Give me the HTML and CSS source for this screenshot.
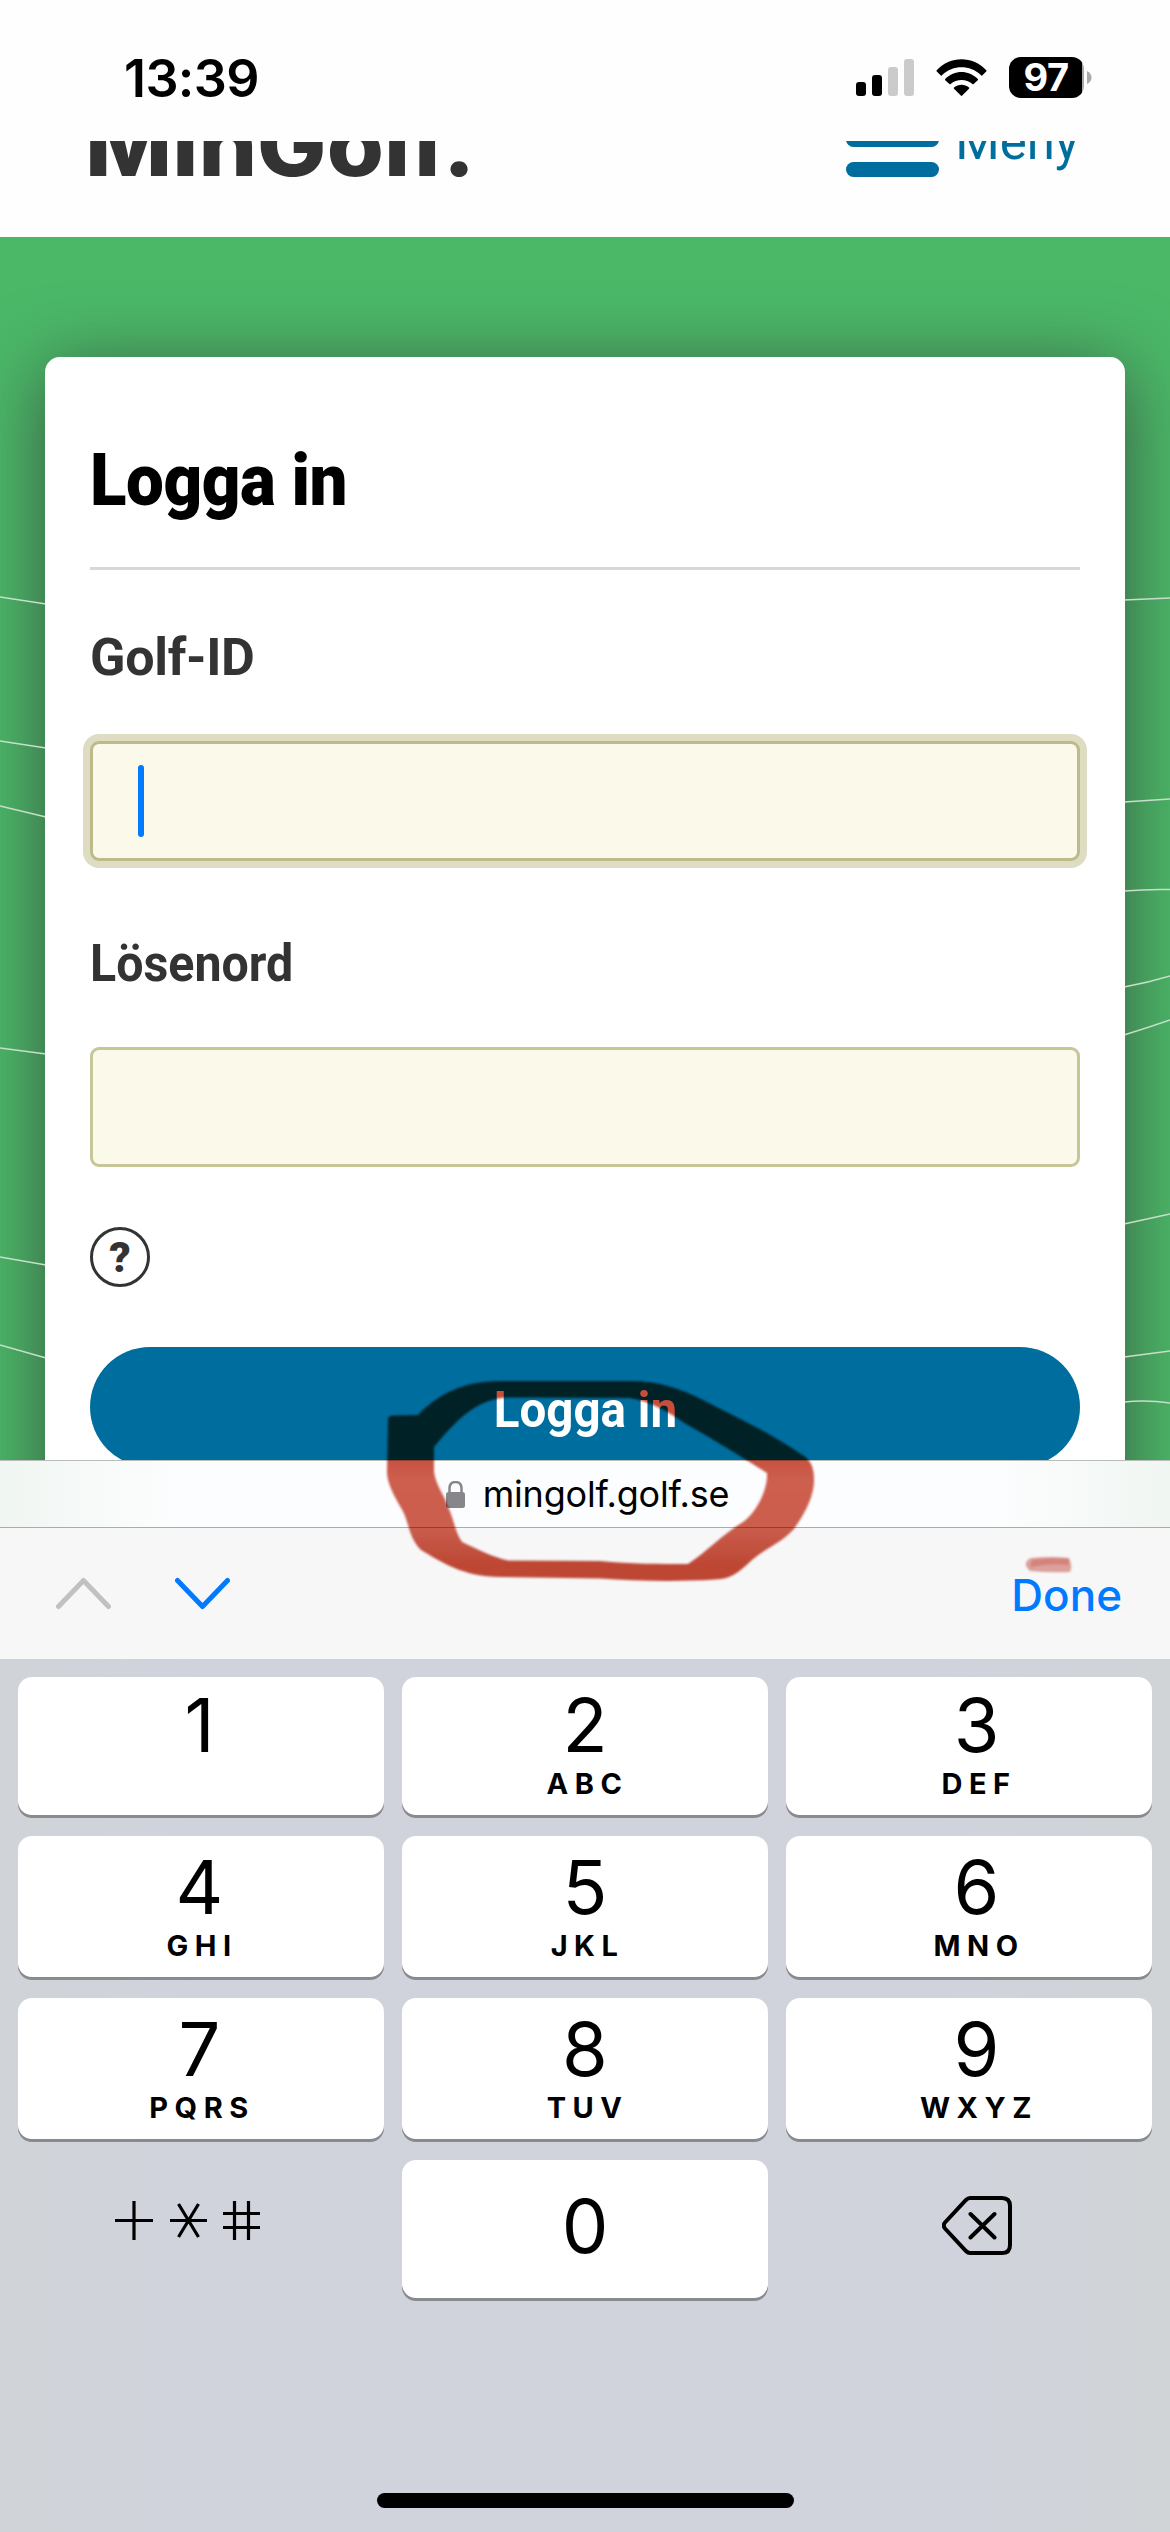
FILE: index.html
```html
<!DOCTYPE html>
<html lang="sv">
<head>
<meta charset="utf-8">
<title>MinGolf</title>
<link rel="stylesheet" href="styles.css">
</head>
<body>
<div class="phone">
  <div class="status">
    <span class="time">13:39</span>
    <div class="indicators">
      <svg class="signal" width="58" height="37" viewBox="0 0 58 37">
        <rect y="23" width="10" height="14" rx="3"/><rect x="16" y="16" width="10" height="21" rx="3"/>
        <rect class="off" x="32" y="8" width="10" height="29" rx="3"/><rect class="off" x="48" width="10" height="37" rx="3"/>
      </svg>
      <svg class="wifi" width="51" height="38" viewBox="0 0 51 38">
        <path d="M0.7 11.3C14-3.3 37-3.3 50.300 11.300Q50.800 12 50.200 12.600L46.200 16.400Q45.600 16.900 45 16.300C34 5.700 17 5.700 6 16.300Q5.400 16.900 4.800 16.400L.8 12.600Q.2 12 .7 11.300Z"/>
        <path d="M9.200 20C18.500 10.800 32.500 10.800 41.800 20Q42.400 20.600 41.800 21.200L37.600 25Q37 25.500 36.400 25C30.500 19.500 20.500 19.500 14.600 25Q14 25.500 13.400 25L9.200 21.200Q8.600 20.600 9.200 20Z"/>
        <path d="M18 28.500C22.500 24.700 28.500 24.700 33 28.500Q33.600 29.100 33 29.700L26.200 36.600Q25.500 37.300 24.800 36.600L18 29.700Q17.400 29.100 18 28.500Z"/>
      </svg>
      <div class="battery"><span class="level">97</span></div>
      <svg class="nub" width="5" height="13" viewBox="0 0 5 13"><path d="M0 0Q4.500 2.500 4.500 6.500T0 13Z"/></svg>
    </div>
  </div>

  <header class="site-header">
    <span class="logo">MinGolf.</span>
    <div class="menu">
      <div class="burger"><i></i><i></i><i></i></div>
      <span class="menu-text">Meny</span>
    </div>
  </header>

  <main class="hero">
    <svg class="contours" viewBox="0 237 1170 1223" width="1170" height="1223">
      <path d="M0 597L46 604M0 741L46 748M0 806L46 817M0 1048L46 1054M0 1257L46 1265M0 1345L46 1358"/>
      <path d="M1124 600L1170 598M1124 802L1170 799M1124 891Q1147 889 1170 889.500M1124 987Q1147 983 1170 976M1124 1035Q1147 1028 1170 1020M1124 1224L1170 1214M1124 1357L1170 1351M1124 1402Q1147 1399.500 1170 1403"/>
    </svg>
    <section class="card">
      <h1 class="title"><span>Logga in</span></h1>
      <label class="label">Golf-ID</label>
      <div class="field focused"><span class="caret"></span></div>
      <label class="label second"><span>Lösenord</span></label>
      <div class="field"></div>
      <div class="help">?</div>
      <div class="submit"><span>Logga in</span></div>
    </section>
  </main>

  <div class="url-bar">
    <svg width="19" height="27" viewBox="0 0 19 27"><rect y="11" width="19" height="16" rx="2.500"/><path d="M3.500 12V7.500Q3.500 1 9.500 1T15.500 7.500V12"/></svg>
    <span class="domain">mingolf.golf.se</span>
  </div>

  <div class="accessory">
    <svg class="prev" width="55" height="33" viewBox="0 0 55 33"><path d="M2.500 29.500L27.500 3.500L52.500 29.500"/></svg>
    <svg class="next" width="55" height="33" viewBox="0 0 55 33"><path d="M2.500 3.500L27.500 29.500L52.500 3.500"/></svg>
    <span class="done">Done</span>
  </div>

  <div class="keyboard">
    <div class="keys">
      <div class="key short left"><b>1</b></div>
      <div class="key short"><b>2</b><small>ABC</small></div>
      <div class="key short right"><b>3</b><small>DEF</small></div>
      <div class="key left"><b>4</b><small>GHI</small></div>
      <div class="key"><b>5</b><small>JKL</small></div>
      <div class="key right"><b>6</b><small>MNO</small></div>
      <div class="key left"><b>7</b><small>PQRS</small></div>
      <div class="key"><b>8</b><small>TUV</small></div>
      <div class="key right"><b>9</b><small>WXYZ</small></div>
      <div class="plain symbols">
        <svg width="146" height="39" viewBox="0 0 146 39"><path d="M0 19.500H38M19 0V39M55 19.500H92M63.500 3L83.500 36M83.500 3L63.500 36M108 12.500H145M108 26.500H145M119.500 0V39M133.500 0V39"/></svg>
      </div>
      <div class="key zero"><b>0</b></div>
      <div class="plain erase">
        <svg width="70" height="59" viewBox="0 0 70 59"><path d="M28 2H60Q68 2 68 10V49Q68 57 60 57H28Q26 57 24 55L3 32.500Q.5 29.500 3 26.500L24 4Q26 2 28 2ZM28.500 18L52.500 41.500M52.500 18L28.500 41.500"/></svg>
      </div>
    </div>
    <div class="home"></div>
  </div>

  <svg class="ink" viewBox="340 1330 780 270" width="780" height="270">
    <defs>
      <filter id="soft" x="-10%" y="-10%" width="120%" height="120%"><feGaussianBlur stdDeviation="1.3"/></filter>
      <linearGradient id="stroke" gradientUnits="userSpaceOnUse" x1="0" y1="1380" x2="0" y2="1580">
        <stop offset="0" stop-color="#c84d3a"/><stop offset=".38" stop-color="#c9503d"/>
        <stop offset=".5" stop-color="#d0604f"/><stop offset=".75" stop-color="#cf5f4d"/><stop offset=".92" stop-color="#c44a36"/>
      </linearGradient>
    </defs>
    <g filter="url(#soft)">
      <path class="ring" fill-rule="evenodd" d="M388 1419Q388 1415.500 394 1415.500L418 1415C437 1395 463 1381 500 1381H625C654 1380 678 1387 703 1400C738 1418 772 1434 801 1454Q815 1461 814 1482C813 1502 800 1520 794 1529C780 1544 764 1549 752 1560C739 1572 732 1579 715 1579.500C677 1582 635 1581 600 1578.500L500 1577C464 1577 441 1562 421 1550C408 1537 409 1520 401 1508C392 1492 387 1482 387 1472ZM434 1447V1472C436 1486 445 1496 448 1507C454 1519 455 1532 462 1542C477 1549 492 1557 508 1560.500L600 1561C631 1564 660 1564 688 1564C705 1553 722 1535 743 1522C756 1513 768 1490 767 1473C742 1457 713 1439 686 1424C668 1412 651 1401 629 1398L510 1397.500C478 1398 459 1417 434 1447Z"/>
      <path class="dash" d="M1031 1558Q1051 1556 1069 1558Q1073 1566 1070 1572Q1050 1573 1030 1571Q1021 1563 1031 1558Z"/>
      <path class="dash" d="M1032 1560Q1050 1557 1069 1559V1565Q1050 1563 1030 1567Z"/>
    </g>
  </svg>
</div>
</body>
</html>
```
FILE: styles.css
```css
* { box-sizing: border-box; }
body { margin: 0; font-family: Inter, "Liberation Sans", sans-serif; color: #000; background: #fff; }
svg { display: block; flex: none; }
.phone { position: relative; isolation: isolate; display: flex; flex-direction: column; width: 1170px; height: 2532px; overflow: hidden; background: #fff; }

.status { height: 141px; flex: none; display: flex; justify-content: space-between; padding: 0 78px 0 124px; background: #fefefe; }
.time { margin-top: 49px; font-size: 52px; line-height: 60px; font-weight: 600; letter-spacing: -.6px; }
.indicators { display: flex; align-items: center; height: 41px; margin-top: 57px; }
.signal { margin-right: 22px; }
.signal .off { fill: #cbcbcb; }
.wifi { margin-right: 22px; }
.battery { width: 75px; height: 41px; border-radius: 12px; background: linear-gradient(90deg, #000 73px, #aaa 73px); margin-right: 3px; }
.level { display: block; width: 74px; text-align: center; color: #fff; font-size: 38px; line-height: 41px; font-weight: 700; letter-spacing: -.5px; }
.nub { fill: #aaa; }

.site-header { height: 96px; flex: none; overflow: hidden; display: flex; justify-content: space-between; align-items: flex-start; padding: 0 91px 0 90px; background: #fefefe; }
.logo { margin: -31px 0 0 -5px; font-size: 86px; line-height: 70px; font-weight: 800; color: #333; transform: scaleX(1.075); transform-origin: 0 50%; }
.menu { display: flex; gap: 16px; color: #006d9f; }
.burger { display: flex; flex-direction: column; gap: 15px; margin-top: -39px; }
.burger i { width: 93px; height: 15px; border-radius: 8px; background: #006d9f; }
.menu-text { font-family: Roboto, sans-serif; font-size: 51px; line-height: 46px; margin-top: -22px; }

.hero { position: relative; height: 1223px; flex: none; overflow: hidden; background: #4bb868; padding: 120px 45px 0; }
.hero::before { content: ""; position: absolute; left: 45px; right: 45px; top: 120px; height: 1400px; border-radius: 15px; box-shadow: 0 12px 75px rgba(51, 51, 51, .72); }
.contours { position: absolute; left: 0; top: 0; z-index: 1; fill: none; stroke: #c5dfca; stroke-width: 1.5; }
.card { position: relative; z-index: 2; height: 1400px; padding: 0 45px; background: #fff; border-radius: 15px; display: flex; flex-direction: column; align-items: stretch; }
.title { margin: 0; height: 213px; padding-top: 82px; border-bottom: 3px solid #d8d8d8; font-family: Roboto, sans-serif; font-size: 72px; line-height: 84px; font-weight: 900; letter-spacing: -.5px; }
.title span { display: inline-block; transform: scaleX(.935); transform-origin: 0 50%; }
.label { margin: 58px 0 53px; font-family: Roboto, sans-serif; font-size: 52px; line-height: 60px; font-weight: 700; color: #333; letter-spacing: -.3px; }
.label.second { margin-top: 73px; letter-spacing: 0; }
.label span { display: inline-block; transform: scaleX(.93); transform-origin: 0 50%; }
.field { height: 120px; flex: none; border: 3px solid #c7c699; border-radius: 9px; background: #fbf9e9; padding: 21px 45px; }
.focused { border-color: #bdbb8a; box-shadow: 0 0 0 7px #deddc4; }
.caret { display: block; width: 6px; height: 72px; border-radius: 3px; background: #007aff; }
.help { width: 60px; height: 60px; margin: 60px 0; border: 3px solid #333; border-radius: 50%; font: 900 42px/55px Roboto, sans-serif; text-align: center; color: #333; }
.submit { height: 120px; flex: none; border-radius: 60px; background: #006d9f; color: #fff; font: 700 50px/127px Roboto, sans-serif; text-align: center; }
.submit span { display: inline-block; transform: scaleX(.95); }

.url-bar { height: 67px; flex: none; border-top: 1px solid #b8bcba; display: flex; align-items: center; justify-content: center; gap: 18px; padding-left: 5px; background: linear-gradient(90deg, #f0f6f2, #fcfdfe 170px, #fcfdfe 1000px, #f0f6f2); }
.url-bar svg { fill: #87868b; }
.url-bar path { fill: none; stroke: #87868b; stroke-width: 2.500; }
.domain { font-size: 36px; line-height: 60px; letter-spacing: -.2px; margin-top: -1px; }

.accessory { height: 132px; flex: none; border-top: 1px solid #a9abad; background: #f7f7f8; display: flex; align-items: center; padding: 0 48px 0 56px; }
.accessory path { fill: none; stroke-width: 5; stroke-linecap: round; stroke-linejoin: round; }
.prev { stroke: #c1c1c1; margin-right: 64px; }
.next { stroke: #007aff; }
.done { margin-left: auto; font-size: 44px; line-height: 60px; font-weight: 500; color: #007aff; margin-top: 2px; }

.keyboard { flex: 1; background: linear-gradient(90deg, #d0d4d8, #d0d3dc 200px, #d0d3dc 930px, #d0d4d7); padding: 18px 18px 0; display: flex; flex-direction: column; align-items: center; }
.keys { width: 1134px; display: grid; grid-template-columns: repeat(3, 1fr); grid-template-rows: 138px 141px 141px 138px; gap: 21px 18px; }
.key { background: #fff; border-radius: 14px; box-shadow: 0 3px 0 #888a8e; text-align: center; padding-top: 13px; }
.key.left { padding-right: 3px; }
.key.right { padding-left: 15px; }
.key.short { padding-top: 10px; }
.key b { display: block; font-size: 74px; line-height: 76px; font-weight: 400; }
.key small { display: block; font-size: 29px; line-height: 34px; font-weight: 700; letter-spacing: 6.500px; margin-right: -5px; margin-top: 4px; }
.key.zero { padding-top: 28px; }
.plain { display: flex; }
.symbols { padding: 41px 0 0 97px; fill: none; stroke: #000; stroke-width: 3.200; }
.erase { padding: 36px 0 0 156px; fill: none; stroke: #000; stroke-width: 4; stroke-linecap: round; }
.home { width: 417px; height: 15px; margin-top: 195px; border-radius: 8px; background: #000; }

.ink { position: absolute; left: 340px; top: 1330px; z-index: 5; mix-blend-mode: multiply; pointer-events: none; }
.ring { fill: url(#stroke); }
.dash { fill: #d5766b; opacity: .65; }
```
